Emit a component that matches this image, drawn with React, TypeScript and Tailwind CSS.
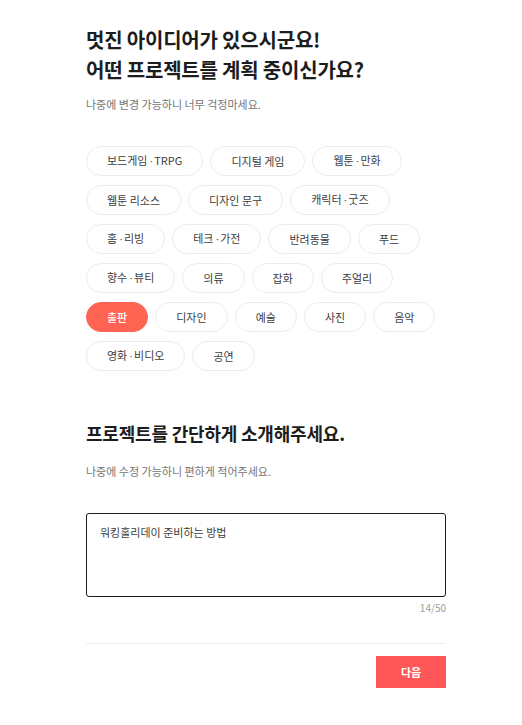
import React, { useState } from "react";

const categories = [
  "보드게임 · TRPG",
  "디지털 게임",
  "웹툰 · 만화",
  "웹툰 리소스",
  "디자인 문구",
  "캐릭터 · 굿즈",
  "홈 · 리빙",
  "테크 · 가전",
  "반려동물",
  "푸드",
  "향수 · 뷰티",
  "의류",
  "잡화",
  "주얼리",
  "출판",
  "디자인",
  "예술",
  "사진",
  "음악",
  "영화 · 비디오",
  "공연",
];

// the CJK font draws "·" full width, so the separator gets a latin font
function Label({ text }: { text: string }) {
  const parts = text.split(" · ");
  return (
    <>
      {parts.map((p, i) => (
        <React.Fragment key={i}>
          {i > 0 && (
            <span
              className="tracking-[-1px]"
              style={{ fontFamily: '"Liberation Sans", sans-serif' }}
            >
              {" · "}
            </span>
          )}
          {p}
        </React.Fragment>
      ))}
    </>
  );
}

export default function App() {
  const [selected, setSelected] = useState("출판");
  const [intro, setIntro] = useState("워킹홀리데이 준비하는 방법");

  return (
    <div
      className="min-h-screen bg-white text-[#1d1d1d]"
      style={{ fontFamily: '"Noto Sans CJK KR", "Noto Sans", sans-serif' }}
    >
      <div className="w-[360px] ml-[86px] pt-[25px]">
        {/* Category */}
        <h1 className="text-[20px] font-bold leading-[30px] tracking-[-0.2px]">
          멋진 아이디어가 있으시군요!
          <br />
          어떤 프로젝트를 계획 중이신가요?
        </h1>
        <p className="mt-[11px] text-[11px] text-[#757575] leading-[16px]">
          나중에 변경 가능하니 너무 걱정마세요.
        </p>

        <div className="mt-[34px] flex flex-wrap gap-x-[7px] gap-y-[9px]">
          {categories.map((c) => {
            const on = c === selected;
            return (
              <button
                key={c}
                onClick={() => setSelected(c)}
                className={`h-[30px] min-w-[60px] px-[20px] rounded-full border text-[11px] leading-none ${
                  on
                    ? "bg-[#ff6452] border-[#ff6452] text-white font-medium"
                    : "bg-white border-[#ececec] text-[#3d3d3d]"
                }`}
              >
                <Label text={c} />
              </button>
            );
          })}
        </div>

        {/* Intro */}
        <h2 className="mt-[49px] text-[18px] font-bold leading-[27px] tracking-[-0.2px]">
          프로젝트를 간단하게 소개해주세요.
        </h2>
        <p className="mt-[16px] text-[11px] text-[#757575] leading-[16px]">
          나중에 수정 가능하니 편하게 적어주세요.
        </p>

        <textarea
          value={intro}
          onChange={(e) => setIntro(e.target.value.slice(0, 50))}
          className="mt-[34px] block w-full h-[84px] resize-none rounded-[3px] border border-[#1d1d1d] px-[13px] py-[10px] text-[11px] leading-[16px] text-[#3d3d3d] outline-none"
        />
        <div className="mt-[4px] text-right text-[10px] text-[#9e9e9e] leading-[14px]">
          {intro.length}/50
        </div>

        <div className="mt-[28px] border-t border-[#efefef]" />

        <div className="mt-[12px] flex justify-end">
          <button className="w-[70px] h-[32px] bg-[#ff5757] text-white text-[11px] font-bold">
            다음
          </button>
        </div>
      </div>
    </div>
  );
}
